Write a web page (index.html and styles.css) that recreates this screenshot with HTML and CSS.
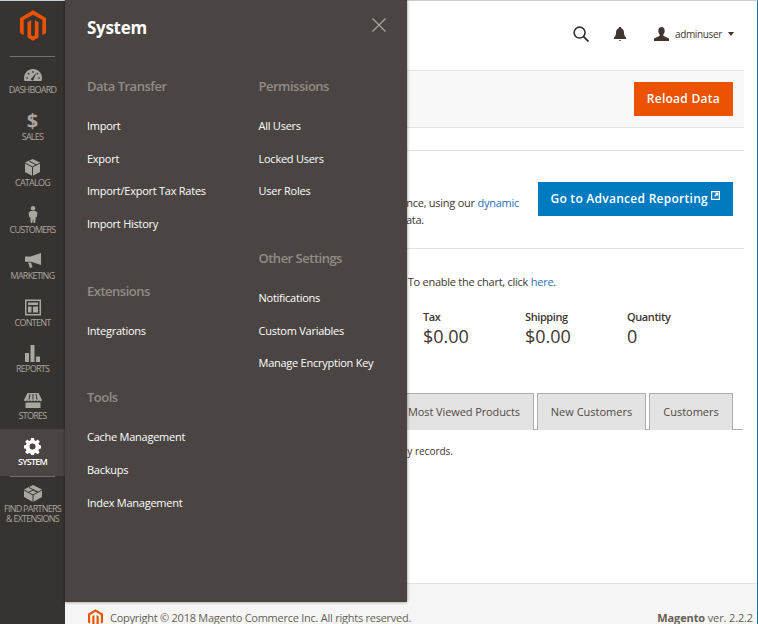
FILE: index.html

```html
<!DOCTYPE html>
<html lang="en">
<head>
<meta charset="UTF-8">
<title>Dashboard / Magento Admin</title>
<link rel="stylesheet" href="styles.css">
</head>
<body>

<aside class="sidebar">
    <a class="logo" href="#">
        <svg width="26" height="31" viewBox="0 0 24 28"><path fill="#eb5202" d="M12 0L0 7v14l3.4 2V9l8.6-5 8.6 5v14l3.4-2V7z"/><path fill="#eb5202" d="M13.7 23l-1.7 1-1.7-1V9L6.9 11v14l5.1 3 5.1-3V11l-3.4-2z"/></svg>
    </a>
    <nav class="nav">
        <a class="nav-item" href="#">
            <svg class="nav-icon" width="18" height="17" viewBox="0 0 18 17"><g transform="translate(0 3)"><path fill="#aaa6a0" d="M9 0C4 0 0 4 0 9c0 1 .2 2 .6 3h16.800c.4-1 .6-2 .6-3 0-5-4-9-9-9z"/><path stroke="#373330" stroke-width="1.200" d="M9 2v2M4 4l1.300 1.300M14 4l-1.300 1.300M2 9h2M14 9h2"/><path fill="#373330" d="M12.500 3.500L9.800 9.800a1.400 1.400 0 1 1-1.600-1z"/></g></svg>
            <span>Dashboard</span>
        </a>
        <a class="nav-item" href="#">
            <span class="nav-icon dollar">$</span>
            <span>Sales</span>
        </a>
        <a class="nav-item" href="#">
            <svg class="nav-icon" width="15" height="17" viewBox="0 0 15 17"><path fill="#aaa6a0" d="M7.500 0L15 3.500v9.500L7.500 17 0 13V3.500z"/><path stroke="#373330" fill="none" d="M0 4l7.500 4L15 4M7.500 8v9M4 2l7.500 4"/></svg>
            <span>Catalog</span>
        </a>
        <a class="nav-item" href="#">
            <svg class="nav-icon" width="10" height="19" viewBox="0 0 10 19"><circle cx="5" cy="2.500" r="2.500" fill="#aaa6a0"/><path fill="#aaa6a0" d="M2 5.500h6l2 2-.8 5H8L7.500 19h-1.800L5 14l-.7 5H2.500L2 12.500H.8L0 7.500z"/></svg>
            <span>Customers</span>
        </a>
        <a class="nav-item" href="#">
            <svg class="nav-icon" width="17" height="15" viewBox="0 0 17 15"><path fill="#aaa6a0" d="M17 0v12L7 8.800H3.500L3 8.800H1V3.500h5.500z"/><path fill="#aaa6a0" d="M4 9.500h3L8.500 14l-2.500 1z"/></svg>
            <span>Marketing</span>
        </a>
        <a class="nav-item" href="#">
            <svg class="nav-icon" width="16" height="16" viewBox="0 0 16 16"><path fill="#aaa6a0" fill-rule="evenodd" d="M0 0h16v16H0zM1.500 1.500v13h13v-13zM3 3h10v2.500H3zM3 7h3.500v6H3zM8 7h5v6H8z"/></svg>
            <span>Content</span>
        </a>
        <a class="nav-item" href="#">
            <svg class="nav-icon" width="15" height="17" viewBox="0 0 15 17"><path fill="#aaa6a0" d="M0 8h4v9H0zM5.500 0h4v17h-4zM11 11.500h4V17h-4z"/></svg>
            <span>Reports</span>
        </a>
        <a class="nav-item" href="#">
            <svg class="nav-icon" width="18" height="15" viewBox="0 0 18 15"><path fill="#aaa6a0" d="M3.500 0h11L18 7c0 1.500-3 1.500-3 0 0 1.500-3 1.500-3 0 0 1.500-3 1.500-3 0 0 1.500-3 1.500-3 0 0 1.500-3 1.500-3 0 0 1.500-3 1.500-3 0zM1.500 9.500h15V15h-15z"/><path stroke="#373330" d="M6 1L5 6.500M9 1v5.500M12 1l1 5.500"/></svg>
            <span>Stores</span>
        </a>
        <a class="nav-item active" href="#">
            <svg class="nav-icon" width="17" height="17" viewBox="0 0 17 17"><path fill="#fff" fill-rule="evenodd" d="M7 0h3l.4 2.300 1.500.6L13.800 1.600 15.900 3.700 14.500 5.600l.6 1.500 1.900.4v3l-2 .4-.6 1.400 1.300 1.900-2.100 2.100-1.900-1.300-1.400.6-.4 1.900H7l-.4-2-1.500-.6-1.900 1.300L1.100 14.100l1.300-1.900-.6-1.400L0 10.400v-3l1.900-.4.600-1.400L1.200 3.700 3.300 1.600l1.800 1.300 1.500-.6zM8.500 5.500a3 3 0 1 0 0 6 3 3 0 0 0 0-6z"/></svg>
            <span>System</span>
        </a>
        <a class="nav-item partners" href="#">
            <svg class="nav-icon" width="18" height="17" viewBox="0 0 18 17"><path fill="#aaa6a0" d="M9 0l9 4.500V12l-9 5-9-5V4.500z"/><path stroke="#373330" fill="none" d="M0 5l9 5 9-5M9 10v7M5 2.500l9 4.500M5 7l4-2 4 2"/></svg>
            <span>Find Partners<br>&amp; Extensions</span>
        </a>
    </nav>
</aside>

<div class="page">
    <header class="topbar">
        <svg class="search" width="16" height="16" viewBox="0 0 17 17"><circle cx="7" cy="7" r="5.800" fill="none" stroke="#303030" stroke-width="1.700"/><path stroke="#303030" stroke-width="2" d="M11 11l5.500 5.500"/></svg>
        <svg class="bell" width="12" height="14" viewBox="0 0 12 14"><path fill="#41362f" d="M6 0c1 0 1.300.6 1.300 1.200C9.300 1.800 10 3.500 10 6c0 2 1 3.500 2 4.500V12H0v-1.500C1 9.500 2 8 2 6c0-2.500.7-4.200 2.700-4.800C4.700.6 5 0 6 0z"/><path fill="#41362f" d="M4.500 13h3l-1.500 1z"/></svg>
        <svg class="user" width="15" height="14" viewBox="0 0 15 14"><path fill="#41362f" d="M7.500 0c2 0 3.200 1.500 3.200 3.700 0 1.500-.6 3-1.400 3.800v1.300L15 11.500V14H0v-2.500l5.700-2.700V7.500C4.900 6.700 4.300 5.200 4.300 3.700 4.300 1.500 5.500 0 7.500 0z"/></svg>
        <span class="username">adminuser</span>
        <span class="caret"></span>
    </header>

    <div class="actions">
        <button class="btn btn-orange">Reload Data</button>
    </div>

    <div class="spacer-row"></div>

    <section class="reporting">
        <p>Gain new insights and take command of your business' performance, using our <a href="#">dynamic</a><br><span class="reporting-tail">product, order, and customer reports tailored to your customer data.</span></p>
        <button class="btn btn-blue">Go to Advanced Reporting
            <svg width="9" height="9" viewBox="0 0 9 9"><path fill="#fff" fill-rule="evenodd" d="M0 0h9v9H0zM1.200 1.200v6.600h6.600V1.200z"/><path fill="#fff" d="M3.800 1.700h3.500v3.500L6.100 4 4.300 5.800 3.200 4.700 5 2.900z"/></svg>
        </button>
    </section>

    <section class="chart-note">
        <p>Chart is disabled. To enable the chart, click <a href="#">here</a>.</p>
    </section>

    <div class="totals">
        <div class="total"><span class="total-label">Tax</span><span class="total-value">$0.00</span></div>
        <div class="total"><span class="total-label">Shipping</span><span class="total-value">$0.00</span></div>
        <div class="total"><span class="total-label">Quantity</span><span class="total-value">0</span></div>
    </div>

    <div class="tabs">
        <a class="tab tab-first" href="#">Most Viewed Products</a>
        <a class="tab tab-new" href="#">New Customers</a>
        <a class="tab tab-last" href="#">Customers</a>
    </div>
    <p class="empty">We couldn't find any records.</p>

    <footer class="footer">
        <svg width="15" height="18" viewBox="0 0 24 28"><path fill="#eb5202" d="M12 0L0 7v14l3.4 2V9l8.6-5 8.6 5v14l3.4-2V7z"/><path fill="#eb5202" d="M13.7 23l-1.700 1-1.700-1V9L6.900 11v14l5.100 3 5.100-3V11l-3.400-2z"/></svg>
        <span class="copyright">Copyright © 2018 Magento Commerce Inc. All rights reserved.</span>
        <span class="version"><b>Magento</b> ver. 2.2.2</span>
    </footer>
</div>

<!-- slide-out menu, sits over the page -->
<div class="panel">
    <div class="panel-head">
        <h2>System</h2>
        <svg class="close" width="14" height="14" viewBox="0 0 14 14"><path stroke="#a8a4a0" stroke-width="1.300" d="M.5.500l13 13M13.500.500l-13 13"/></svg>
    </div>
    <div class="panel-cols">
        <div class="panel-col">
            <h3>Data Transfer</h3>
            <ul>
                <li><a href="#">Import</a></li>
                <li><a href="#">Export</a></li>
                <li><a href="#">Import/Export Tax Rates</a></li>
                <li><a href="#">Import History</a></li>
            </ul>
            <h3>Extensions</h3>
            <ul>
                <li><a href="#">Integrations</a></li>
            </ul>
            <h3>Tools</h3>
            <ul>
                <li><a href="#">Cache Management</a></li>
                <li><a href="#">Backups</a></li>
                <li><a href="#">Index Management</a></li>
            </ul>
        </div>
        <div class="panel-col">
            <h3>Permissions</h3>
            <ul>
                <li><a href="#">All Users</a></li>
                <li><a href="#">Locked Users</a></li>
                <li><a href="#">User Roles</a></li>
            </ul>
            <h3>Other Settings</h3>
            <ul>
                <li><a href="#">Notifications</a></li>
                <li><a href="#">Custom Variables</a></li>
                <li><a href="#">Manage Encryption Key</a></li>
            </ul>
        </div>
    </div>
</div>

</body>
</html>
```

FILE: styles.css

```css
* {
    box-sizing: border-box;
}

html, body {
    margin: 0;
    height: 624px;
    overflow: hidden;
}

body {
    display: flex;
    font-family: "Open Sans", sans-serif;
    font-size: 12px;
    color: #41362f;
    background: #fff;
    border-top: 1px solid #c9cdd0;
    border-right: 1px solid #2b6f9e;
}

a {
    text-decoration: none;
}

/* sidebar */
.sidebar {
    width: 65px;
    flex: none;
    margin-top: -1px;
    background: #373330;
}

.logo {
    display: flex;
    justify-content: center;
    height: 57px;
    padding-top: 10px;
    margin: 0 10px;
    border-bottom: 1px solid #736f6a;
}

.nav-item {
    display: flex;
    flex-direction: column;
    align-items: center;
    height: 46.5px;
    padding-top: 9px;
    font-size: 9px;
    line-height: 12px;
    letter-spacing: -0.75px;
    white-space: nowrap;
    text-align: center;
    text-transform: uppercase;
    color: #aaa6a0;
}

.nav-item span {
    margin-top: 1px;
}

.nav-icon {
    height: 17px;
}

.nav-item .dollar {
    margin-top: 0;
    font-size: 20px;
    font-weight: 700;
    line-height: 15px;
    letter-spacing: 0;
}

.nav-item.active {
    background: #4a4542;
    color: #fff;
    font-weight: 600;
}

.partners {
    position: relative;
    height: 60px;
    line-height: 10px;
}

.partners::before {
    content: "";
    position: absolute;
    top: 0;
    left: 10px;
    right: 10px;
    border-top: 1px solid #736f6a;
}

.nav-item.partners span {
    margin-top: 2px;
}

/* page */
.page {
    flex: 1;
    min-width: 0;
    display: flex;
    flex-direction: column;
}

.topbar {
    display: flex;
    align-items: center;
    justify-content: flex-end;
    height: 69px;
    padding: 0 23px 4px 0;
}

.search {
    margin-right: 25px;
}

.bell {
    margin-right: 28px;
}

.user {
    margin-right: 6px;
}

.username {
    font-size: 10px;
    letter-spacing: -0.35px;
}

.caret {
    margin-left: 6px;
    border-top: 4px solid #41362f;
    border-left: 3px solid transparent;
    border-right: 3px solid transparent;
}

.actions {
    display: flex;
    justify-content: flex-end;
    align-items: center;
    height: 58px;
    margin-right: 13px;
    padding-right: 11px;
    background: #f8f8f8;
    background-image: radial-gradient(#f1f1f1 0.5px, transparent 0.5px);
    background-size: 4px 4px;
    border-top: 1px solid #e3e3e3;
    border-bottom: 1px solid #e3e3e3;
}

.btn {
    height: 34px;
    padding: 0 13px 2px;
    border: 0;
    font-family: inherit;
    font-size: 12px;
    font-weight: 600;
    letter-spacing: 0.27px;
    color: #fff;
}

.btn-orange {
    background: #eb5202;
}

.btn-blue {
    display: flex;
    align-items: center;
    gap: 3px;
    padding-left: 12px;
    background: #007bbf;
}

.btn-blue svg {
    margin-bottom: 6px;
}

.spacer-row {
    height: 23px;
    margin-right: 13px;
    border-bottom: 1px solid #e3e3e3;
}

.reporting {
    display: flex;
    justify-content: space-between;
    align-items: flex-start;
    height: 98px;
    margin-right: 13px;
    padding: 31px 11px 0 0;
    border-bottom: 1px solid #e3e3e3;
}

.reporting p {
    flex: none;
    width: 454px;
    margin: 12px 0 0 0;
    font-size: 11px;
    line-height: 17px;
    letter-spacing: -0.25px;
    white-space: nowrap;
    text-align: right;
    overflow: hidden;
}

/* second line stops short of the first */
.reporting-tail {
    margin-right: 95px;
}

.reporting a, .chart-note a {
    color: #2a70b8;
}

.chart-note {
    height: 59px;
    padding-top: 24px;
    margin-right: 201px;
    font-size: 11px;
    line-height: 17px;
    letter-spacing: -0.25px;
    text-align: right;
}

.chart-note p {
    margin: 0;
}

.totals {
    display: flex;
    height: 85px;
    padding-left: 358px;
}

.total {
    width: 102px;
    display: flex;
    flex-direction: column;
}

.total-label {
    margin-top: 1px;
    font-size: 11px;
    font-weight: 600;
    line-height: 16px;
    letter-spacing: -0.4px;
}

.total-value {
    font-size: 18px;
    line-height: 22px;
}

.tabs {
    display: flex;
    justify-content: flex-end;
    gap: 3px;
    height: 37px;
    margin-right: 14px;
    padding-right: 10px;
    border-bottom: 1px solid #adadad;
}

.tab {
    display: flex;
    align-items: center;
    justify-content: center;
    height: 37px;
    padding-bottom: 2px;
    background: #e3e3e3;
    border: 1px solid #adadad;
    border-bottom: 0;
    font-size: 11px;
    color: #514943;
}

.tab-first {
    width: 180px;
    padding-right: 13px;
    justify-content: flex-end;
    letter-spacing: -0.1px;
}

.tab-new {
    width: 109px;
}

.tab-last {
    width: 84px;
}

.empty {
    width: 388px;
    margin: 13px 0 0 0;
    font-size: 10px;
    line-height: 16px;
    text-align: right;
}

.footer {
    display: flex;
    align-items: flex-start;
    margin-top: auto;
    height: 41px;
    padding: 25px 4px 0 23px;
    background: #f5f5f5;
    border-top: 1px solid #e3e3e3;
    font-size: 11px;
    line-height: 18px;
    color: #676056;
}

.copyright {
    margin-left: 7px;
    letter-spacing: -0.25px;
}

.version {
    margin-left: auto;
    letter-spacing: -0.13px;
}

/* menu panel */
.panel {
    position: absolute;
    top: 0;
    left: 65px;
    width: 342px;
    height: 602px;
    padding: 0 21px 0 22px;
    background: #4a4542;
    box-shadow: 0 0 3px rgba(0, 0, 0, 0.5);
    color: #fff;
}

.panel-head {
    display: flex;
    justify-content: space-between;
    height: 77px;
    padding-top: 16px;
}

.panel-head h2 {
    margin: 0;
    font-size: 17px;
    font-weight: 700;
    line-height: 24px;
    letter-spacing: -0.3px;
}

.close {
    margin-top: 2px;
}

.panel-cols {
    display: flex;
}

.panel-col {
    flex: none;
    width: 171.5px;
}

.panel-col h3 {
    height: 40px;
    margin: 0;
    font-size: 13px;
    font-weight: 600;
    line-height: 18px;
    letter-spacing: -0.5px;
    color: #918c87;
}

.panel-col ul {
    margin: 0 0 34px 0;
    padding: 0;
    list-style: none;
}

.panel-col li {
    height: 32.67px;
    line-height: 18px;
}

.panel-col li a {
    font-size: 11px;
    letter-spacing: -0.25px;
    color: #fff;
}
```
